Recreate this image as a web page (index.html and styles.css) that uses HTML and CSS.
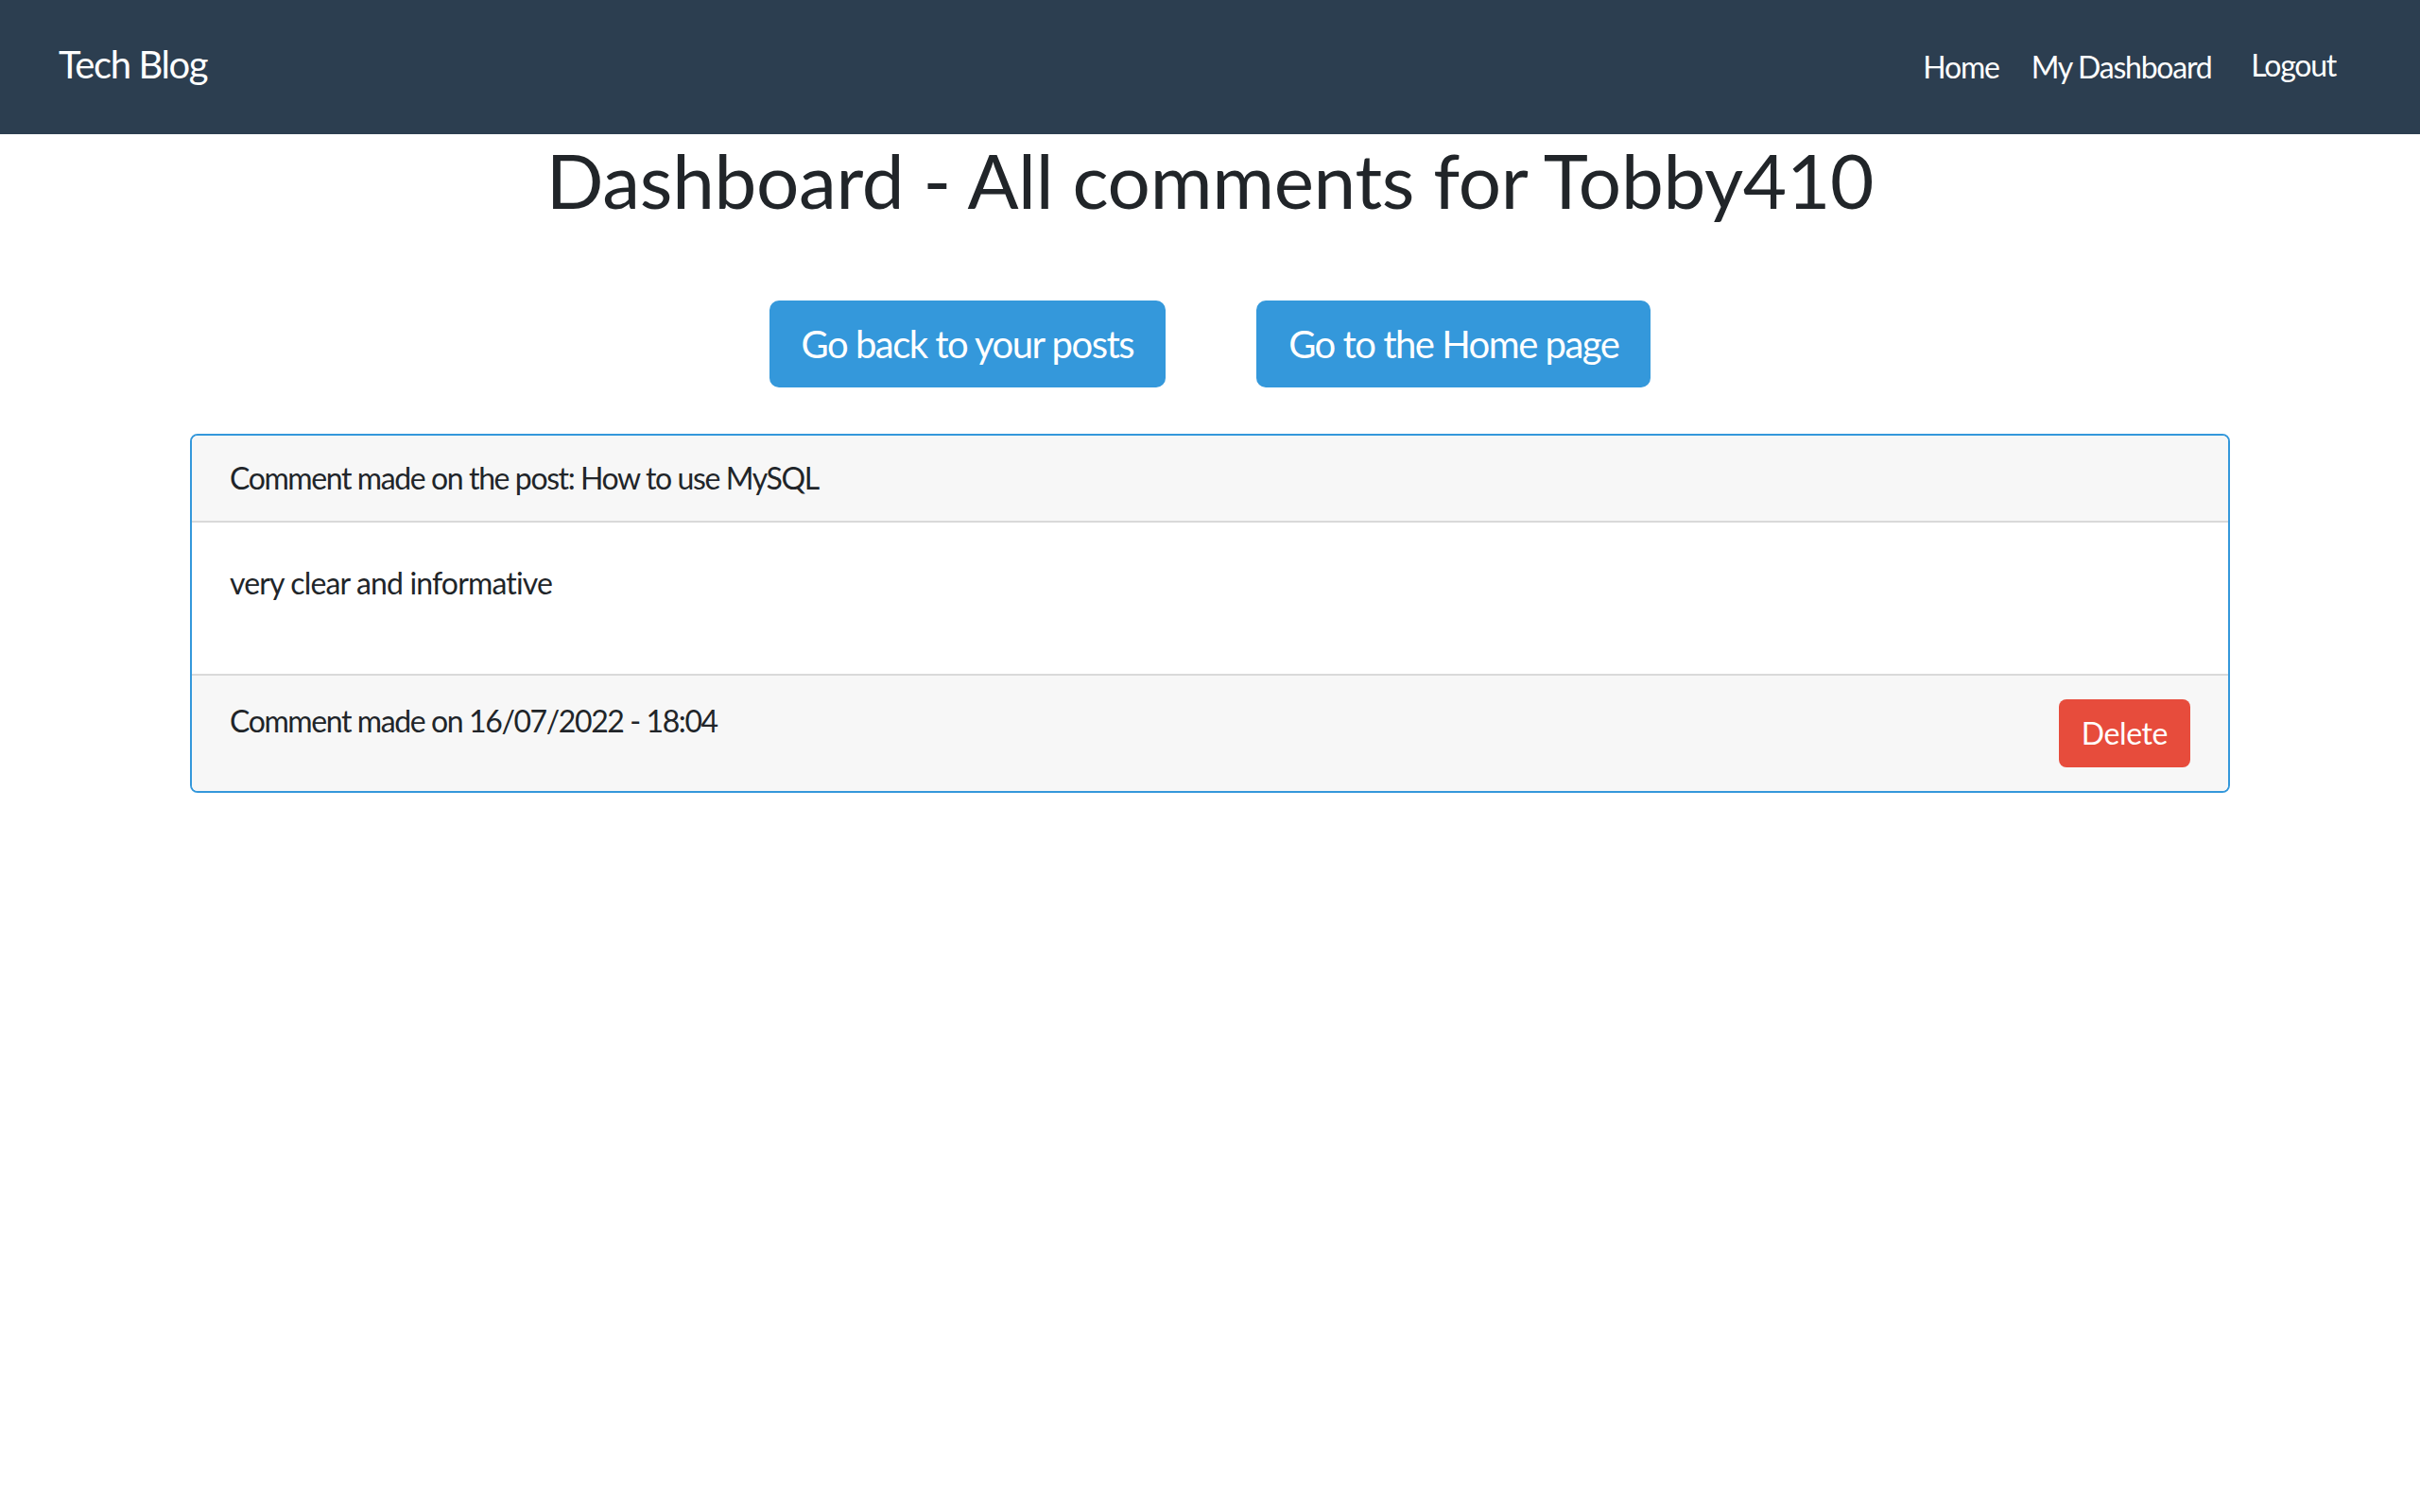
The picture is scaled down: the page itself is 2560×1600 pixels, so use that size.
FILE: index.html
```html
<!DOCTYPE html>
<html lang="en">
<head>
<meta charset="utf-8">
<title>Tech Blog</title>
<link rel="stylesheet" href="styles.css">
</head>
<body>
<nav class="navbar">
  <a class="brand" href="#">Tech Blog</a>
  <div class="nav-links">
    <a class="nav-link" href="#">Home</a>
    <a class="nav-link" href="#">My Dashboard</a>
    <button class="nav-link logout" type="button">Logout</button>
  </div>
</nav>
<main class="page">
  <h1 class="title">Dashboard - All comments for Tobby410</h1>
  <div class="actions">
    <a class="btn btn-lg btn-primary" href="#">Go back to your posts</a>
    <a class="btn btn-lg btn-primary" href="#">Go to the Home page</a>
  </div>
  <div class="card">
    <div class="card-header">Comment made on the post: How to use MySQL</div>
    <div class="card-body">
      <p class="card-text">very clear and informative</p>
    </div>
    <div class="card-footer">
      <span class="footer-text">Comment made on 16/07/2022 - 18:04</span>
      <button class="btn btn-danger" type="button">Delete</button>
    </div>
  </div>
</main>
</body>
</html>
```
FILE: styles.css
```css
* { box-sizing: border-box; }
html, body { margin: 0; padding: 0; }
body {
  font-family: Lato, "Open Sans", "Liberation Sans", sans-serif;
  color: #212529;
  background: #ffffff;
  font-size: 32px;
  line-height: 1.5;
  letter-spacing: -1.4px;
}
a { text-decoration: none; }

.navbar {
  height: 142px;
  background: #2c3e50;
  display: flex;
  align-items: center;
  justify-content: space-between;
  padding: 0 89px 0 62px;
}
.brand {
  color: #ffffff;
  font-size: 40px;
  line-height: 48px;
  margin-bottom: 7px;
}
.nav-links {
  display: flex;
  align-items: center;
}
.nav-link {
  color: #ffffff;
  font-family: inherit;
  font-size: 32px;
  letter-spacing: -1.25px;
  line-height: 38px;
  padding: 0 17px;
  background: none;
  border: 0;
  cursor: pointer;
}
.nav-links .nav-link:last-child { padding-right: 0; }
.logout {
  margin-left: 8px;
  margin-top: -4px;
}

.page {
  display: flex;
  flex-direction: column;
  align-items: center;
}
.title {
  margin: 0 0 80px;
  font-size: 80px;
  font-weight: 400;
  line-height: 96px;
  letter-spacing: -0.3px;
  color: #212529;
}
.actions {
  display: flex;
  justify-content: center;
  gap: 96px;
}
.btn {
  display: inline-block;
  color: #ffffff;
  border: 0;
  font-family: inherit;
  letter-spacing: inherit;
  cursor: pointer;
}
.btn-lg {
  font-size: 40px;
  line-height: 60px;
  padding: 16px 34px;
  border-radius: 10px;
  letter-spacing: -1.5px;
}
.btn-primary { background: #3498db; }
.btn-danger {
  background: #e74c3c;
  font-size: 32px;
  line-height: 48px;
  padding: 12px 24px;
  border-radius: 8px;
  letter-spacing: -0.4px;
}

.card {
  width: 2158px;
  margin-top: 49px;
  border: 2px solid #3498db;
  border-radius: 8px;
  overflow: hidden;
}
.card-header {
  background: #f7f7f7;
  padding: 21px 40px;
  line-height: 48px;
  border-bottom: 2px solid #d9d9d9;
}
.card-body {
  padding: 40px;
}
.card-text {
  margin: 0 0 32px;
  letter-spacing: -0.85px;
}
.card-footer {
  background: #f7f7f7;
  border-top: 2px solid #d9d9d9;
  padding: 25px 40px 25px;
  display: flex;
  justify-content: space-between;
  align-items: flex-start;
}
.footer-text {
  margin-top: -1px;
}
```
